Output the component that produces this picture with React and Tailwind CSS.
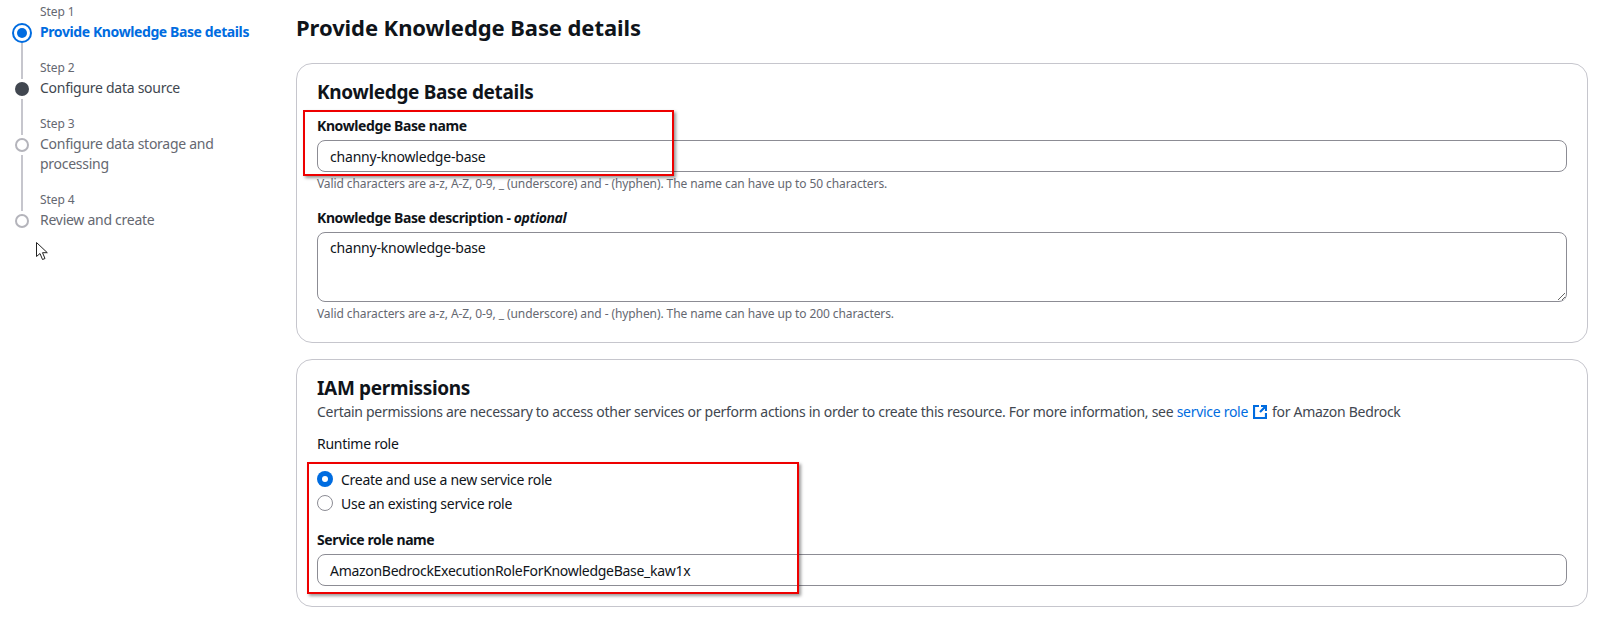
function Step({ n, title, state, first, last }) {
  const titleCls =
    state === "active"
      ? "font-bold tracking-[-0.4px] text-[#006ce0]"
      : state === "next"
      ? "tracking-[-0.27px] text-[#414750]"
      : "tracking-[-0.27px] text-[#656871]";
  return (
    <div className="flex">
      <div className="flex w-[40px] shrink-0 pl-[12px]">
        <div className="flex w-[20px] flex-col items-center">
          <div className={first ? "h-[21px] w-[2px]" : "h-[21px] w-[2px] bg-[#c6c6cd]"} />
          <div className="flex h-[20px] w-[20px] items-center justify-center">
            {state === "active" && (
              <div className="flex h-[20px] w-[20px] items-center justify-center rounded-full border-2 border-[#006ce0] bg-white">
                <div className="h-[10px] w-[10px] rounded-full bg-[#006ce0]" />
              </div>
            )}
            {state === "next" && <div className="h-[14px] w-[14px] rounded-full bg-[#414750]" />}
            {state === "todo" && <div className="h-[14px] w-[14px] rounded-full border-2 border-[#b4b4bb] bg-white" />}
          </div>
          {!last && <div className="w-[2px] flex-1 bg-[#c6c6cd]" />}
        </div>
      </div>
      <div className={last ? "w-[224px]" : "w-[224px] pb-[16px]"}>
        <div className="text-[12px] leading-[20px] tracking-[-0.1px] text-[#656871]">Step {n}</div>
        <div className={`text-[14px] leading-[20px] ${titleCls}`}>{title}</div>
      </div>
    </div>
  );
}

function Input({ value, tight }) {
  return (
    <div className={`mt-[4px] flex h-[32px] items-center rounded-[8px] border border-[#8c8c94] bg-white px-[12px] text-[14px] text-[#0f141a] ${tight ? "tracking-[-0.29px]" : "tracking-[-0.2px]"}`}>
      {value}
    </div>
  );
}

function Helper({ children }) {
  return <div className="mt-[4px] text-[12px] leading-[16px] tracking-[-0.09px] text-[#656871]">{children}</div>;
}

function Radio({ checked, label }) {
  return (
    <div className="flex h-[24px] items-center gap-[8px] text-[14px] tracking-[-0.26px] text-[#0f141a]">
      {checked ? (
        <div className="flex h-[16px] w-[16px] items-center justify-center rounded-full bg-[#006ce0]">
          <div className="h-[6px] w-[6px] rounded-full bg-white" />
        </div>
      ) : (
        <div className="h-[16px] w-[16px] rounded-full border border-[#8c8c94] bg-white" />
      )}
      <span>{label}</span>
    </div>
  );
}

function Label({ children, className }) {
  return <div className={`text-[14px] font-bold leading-[20px] tracking-[-0.4px] ${className}`}>{children}</div>;
}

function RedBox({ className }) {
  return <div className={`pointer-events-none absolute border-2 border-[#ee0000] shadow-[2px_2px_3px_rgba(0,0,0,0.4)] ${className}`} />;
}

export default function App() {
  return (
    <div className="relative flex h-[618px] w-[1608px] overflow-hidden bg-white font-['Noto_Sans',sans-serif] text-[#0f141a]">
      <div className="w-[296px] shrink-0 pt-[2px]">
        <Step n={1} title="Provide Knowledge Base details" state="active" first />
        <Step n={2} title="Configure data source" state="next" />
        <Step n={3} title="Configure data storage and processing" state="todo" />
        <Step n={4} title="Review and create" state="todo" last />
      </div>

      <div className="w-[1292px] shrink-0">
        <h1 className="h-[63px] pt-[12px] text-[22px] font-bold leading-[30px] tracking-[-0.08px]">Provide Knowledge Base details</h1>

        <section className="h-[280px] rounded-[16px] border border-[#c6c6cd] px-[20px] pt-[15px]">
          <h2 className="text-[19px] font-bold leading-[26px] tracking-[-0.33px]">Knowledge Base details</h2>
          <Label className="mt-[11px]">Knowledge Base name</Label>
          <Input value="channy-knowledge-base" />
          <Helper>Valid characters are a-z, A-Z, 0-9, _ (underscore) and - (hyphen). The name can have up to 50 characters.</Helper>
          <Label className="mt-[16px]">
            Knowledge Base description - <span className="italic">optional</span>
          </Label>
          <textarea
            readOnly
            value="channy-knowledge-base"
            className="mt-[4px] block h-[70px] w-full rounded-[8px] border border-[#8c8c94] bg-white px-[12px] py-[4px] text-[14px] leading-[22px] tracking-[-0.2px] text-[#0f141a] outline-none"
          />
          <Helper>Valid characters are a-z, A-Z, 0-9, _ (underscore) and - (hyphen). The name can have up to 200 characters.</Helper>
        </section>

        <section className="mt-[16px] h-[248px] rounded-[16px] border border-[#c6c6cd] px-[20px] pt-[15px]">
          <h2 className="text-[19px] font-bold leading-[26px] tracking-[-0.33px]">IAM permissions</h2>
          <p className="mt-[1px] flex items-center text-[14px] leading-[20px] tracking-[-0.29px] text-[#414750]">
            Certain permissions are necessary to access other services or perform actions in order to create this resource. For more information, see&nbsp;
            <span className="text-[#006ce0]">service role</span>
            <svg viewBox="0 0 14 14" className="ml-[5px] mr-[5px] h-[14px] w-[14px]" fill="none" stroke="#006ce0" strokeWidth="2.2" strokeLinecap="butt">
              <path d="M6 1H1v12h12V8" />
              <path d="M8 1h5v5M13 1 7 7" />
            </svg>
            for Amazon Bedrock
          </p>
          <div className="mt-[12px] text-[14px] leading-[20px] tracking-[-0.27px] text-[#0f141a]">Runtime role</div>
          <div className="mt-[13px]">
            <Radio checked label="Create and use a new service role" />
            <Radio label="Use an existing service role" />
          </div>
          <Label className="mt-[15px]">Service role name</Label>
          <Input tight value="AmazonBedrockExecutionRoleForKnowledgeBase_kaw1x" />
        </section>
      </div>

      <RedBox className="left-[303px] top-[110px] h-[66px] w-[371px]" />
      <RedBox className="left-[307px] top-[462px] h-[132px] w-[492px]" />

      <svg className="absolute left-[35px] top-[241px] h-[20px] w-[14px]" viewBox="0 0 14 20" fill="white" stroke="#222" strokeWidth="1">
        <path d="M1.5 1.5v14l3.5-3 2.5 6 2.5-1-2.5-5.8h4.8z" />
      </svg>
    </div>
  );
}
